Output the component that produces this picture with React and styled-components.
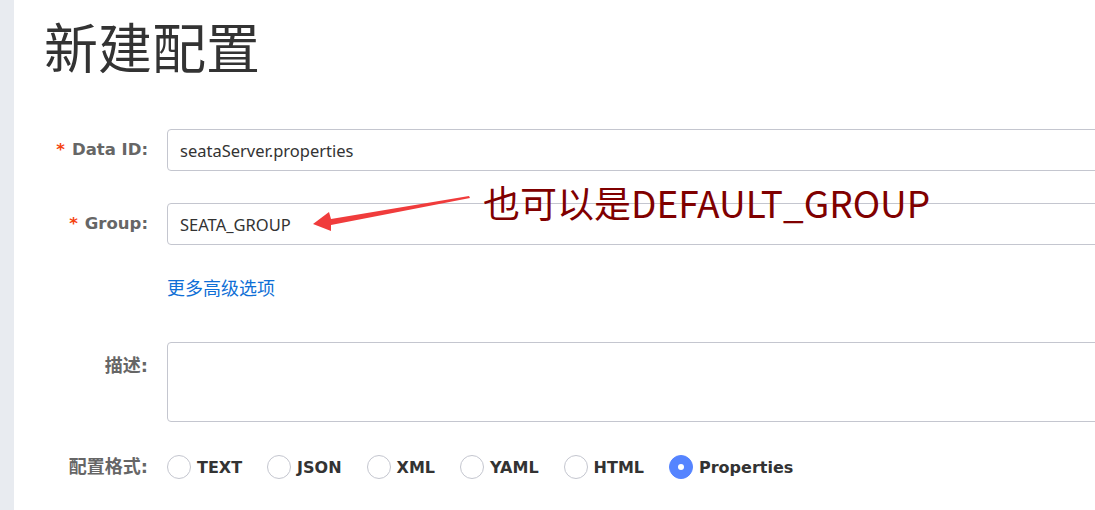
import React from "react";
import styled, { createGlobalStyle } from "styled-components";

const GlobalStyle = createGlobalStyle`
  html, body {
    margin: 0;
    padding: 0;
    background: #fff;
    overflow: hidden;
  }
  body {
    font-family: "Noto Sans", "Noto Sans CJK SC", sans-serif;
  }
`;

const Page = styled.div`
  display: flex;
  width: 1095px;
  height: 510px;
  position: relative;
  overflow: hidden;
`;

const Sidebar = styled.div`
  width: 14px;
  flex-shrink: 0;
  background-color: #e8ebf0;
`;

const Main = styled.div`
  flex: 1;
  padding-left: 30px;
`;

const Title = styled.h1`
  margin: 8px 0 0;
  font-family: "Noto Sans CJK SC", sans-serif;
  font-size: 54px;
  font-weight: 400;
  line-height: 76px;
  color: #333;
`;

const Form = styled.div`
  display: grid;
  grid-template-columns: 104px 1fr;
  column-gap: 19px;
  margin-top: 45px;
  margin-right: -40px;
`;

const Label = styled.div`
  text-align: right;
  font-family: "DejaVu Sans", "Noto Sans CJK SC", sans-serif;
  font-size: ${(p) => p.$size || "16.5px"};
  font-weight: 700;
  color: #666;
  line-height: ${(p) => p.$lh || "42px"};
  padding-top: ${(p) => p.$top || "0"};
  white-space: nowrap;
`;

const Star = styled.span`
  color: #f5430f;
  margin-right: 7px;
`;

const Input = styled.div`
  height: 40px;
  border: 1px solid #c4c6cf;
  border-radius: 4px;
  padding-left: 12px;
  display: flex;
  align-items: center;
  font-family: "Noto Sans", "Noto Sans CJK SC", sans-serif;
  font-size: 16.5px;
  color: #333;
  margin-bottom: ${(p) => p.$mb || "32px"};
`;

const TextArea = styled.div`
  height: 78px;
  border: 1px solid #c4c6cf;
  border-radius: 4px;
  margin-bottom: 22px;
`;

const MoreLink = styled.a`
  display: block;
  font-family: "Noto Sans CJK SC", sans-serif;
  font-size: 18px;
  line-height: 24px;
  color: #0f6fd6;
  margin: 0 0 43px;
  cursor: pointer;
`;

const RadioGroup = styled.div`
  display: flex;
  align-items: center;
  height: 46px;
`;

const RadioItem = styled.label`
  display: flex;
  align-items: center;
  margin-right: 25px;
  font-family: "DejaVu Sans", sans-serif;
  font-size: 16px;
  font-weight: 700;
  color: #333;
`;

const Circle = styled.span`
  width: 22px;
  height: 22px;
  border-radius: 50%;
  border: 1px solid ${(p) => (p.$checked ? "#5584ff" : "#c4c6cf")};
  background: ${(p) => (p.$checked ? "#5584ff" : "#fff")};
  margin-right: 6px;
  display: flex;
  align-items: center;
  justify-content: center;
  &::after {
    content: "";
    width: 6px;
    height: 6px;
    border-radius: 50%;
    background: #fff;
    display: ${(p) => (p.$checked ? "block" : "none")};
  }
`;

const Note = styled.div`
  position: absolute;
  left: 483px;
  top: 176px;
  font-family: "Noto Sans CJK SC", sans-serif;
  font-size: 37px;
  line-height: 52px;
  color: #800000;
  white-space: nowrap;
`;

const Arrow = styled.svg`
  position: absolute;
  left: 0;
  top: 0;
  pointer-events: none;
`;

const formats = ["TEXT", "JSON", "XML", "YAML", "HTML", "Properties"];

export default function App() {
  return (
    <>
      <GlobalStyle />
      <Page>
        <Sidebar />
        <Main>
          <Title>新建配置</Title>
          <Form>
            <Label>
              <Star>*</Star>Data ID:
            </Label>
            <Input>seataServer.properties</Input>
            <Label>
              <Star>*</Star>Group:
            </Label>
            <Input $mb="30px">SEATA_GROUP</Input>
            <div />
            <MoreLink>更多高级选项</MoreLink>
            <Label $lh="24px" $top="12px" $size="18px">描述:</Label>
            <TextArea />
            <Label $lh="46px" $size="18px">配置格式:</Label>
            <RadioGroup>
              {formats.map((f) => (
                <RadioItem key={f}>
                  <Circle $checked={f === "Properties"} />
                  {f}
                </RadioItem>
              ))}
            </RadioGroup>
          </Form>
        </Main>
        <Note>也可以是DEFAULT_GROUP</Note>
        <Arrow width="1095" height="510">
          <polygon
            points="469,196 331,219 329,212 313,224 331,231 331,225 470,198"
            fill="#f03c3c"
          />
        </Arrow>
      </Page>
    </>
  );
}
